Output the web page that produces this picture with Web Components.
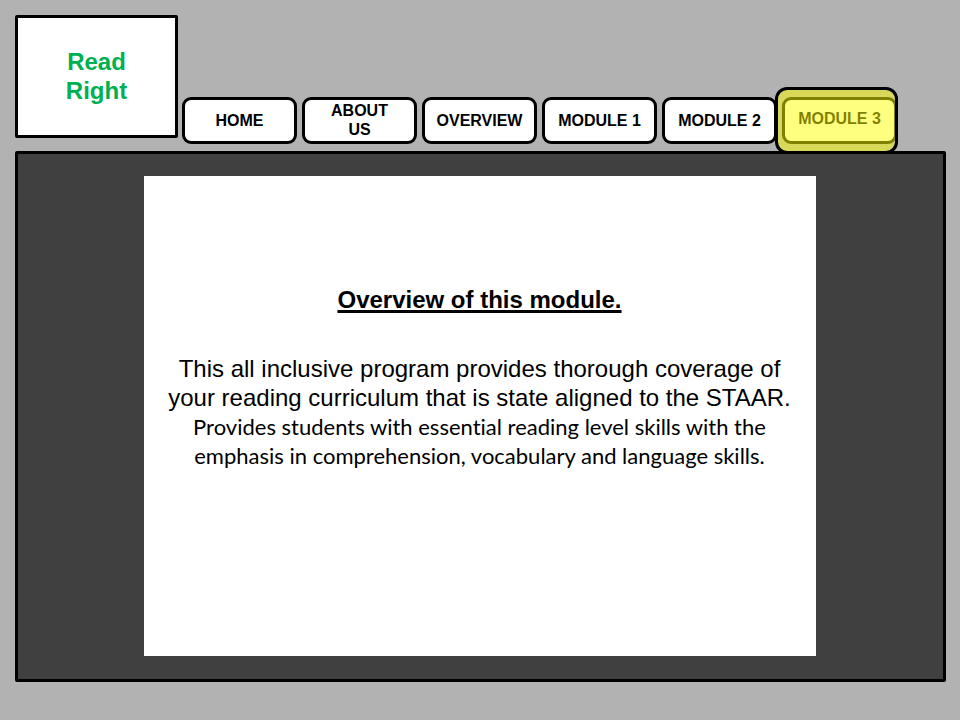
<!DOCTYPE html>
<html lang="en">
<head>
<meta charset="utf-8">
<title>Read Right</title>
<style>
  body { margin: 0; min-height: 100vh; background: #b2b2b2; color: #000; font-family: "Liberation Sans", Arial, sans-serif; }
</style>
</head>
<body>
<rr-page>
  <rr-logo slot="logo">Read<br>Right</rr-logo>
  <rr-nav slot="nav">
    <rr-tab>HOME</rr-tab>
    <rr-tab>ABOUT<br>US</rr-tab>
    <rr-tab>OVERVIEW</rr-tab>
    <rr-tab>MODULE 1</rr-tab>
    <rr-tab>MODULE 2</rr-tab>
    <rr-tab current>MODULE 3</rr-tab>
  </rr-nav>
  <rr-slide>
    <span slot="title">Overview of this module.</span>
    <span slot="lead">This all inclusive program provides thorough coverage of<br>your reading curriculum that is state aligned to the STAAR.</span>
    <span slot="detail">Provides students with essential reading level skills with the<br>emphasis in comprehension, vocabulary and language skills.</span>
  </rr-slide>
</rr-page>
<script>
const define = (name, html) => customElements.define(name, class extends HTMLElement {
  constructor() {
    super();
    this.attachShadow({ mode: "open" }).innerHTML = html;
  }
});

define("rr-page", `
  <style>
    :host { display: block; padding: 15px 14px 15px 15px; }
    header { display: flex; align-items: flex-end; gap: 4px; margin-bottom: 7px; }
    main { display: flex; justify-content: center; padding: 22px 2px 23px 0; border: 3px solid #000; border-radius: 2px; background: #404040; }
  </style>
  <header><slot name="logo"></slot><slot name="nav"></slot></header>
  <main><slot></slot></main>`);

define("rr-logo", `
  <style>
    :host { display: flex; flex: none; align-items: center; justify-content: center; box-sizing: border-box; width: 163px; min-height: 123px; margin-bottom: 6px; padding-bottom: 2px; border: 3px solid #000; border-radius: 2px; background: #fff; color: #00b050; font-size: 24px; line-height: 29px; font-weight: bold; text-align: center; }
  </style>
  <div><slot></slot></div>`);

define("rr-nav", `
  <style>
    :host { display: block; }
    nav { display: flex; gap: 5px; }
  </style>
  <nav><slot></slot></nav>`);

define("rr-tab", `
  <style>
    :host { display: block; position: relative; width: 115px; }
    a { display: flex; align-items: center; justify-content: center; box-sizing: border-box; min-height: 47px; padding-bottom: 1px; border: 3px solid #000; border-radius: 9px; background: #fff; color: #000; font-size: 16px; line-height: 19px; font-weight: bold; text-align: center; text-decoration: none; }
    :host([current]) a { padding-bottom: 4px; }
    :host([current])::after { content: ""; position: absolute; inset: -10px -1px -10px -7px; border: 3px solid #000; border-radius: 12px; background: rgb(255 255 0 / 50%); background-clip: padding-box; pointer-events: none; }
  </style>
  <a href="#"><div><slot></slot></div></a>`);

define("rr-slide", `
  <style>
    :host { display: block; box-sizing: border-box; width: 70vw; aspect-ratio: 7 / 5; padding: 109px 16px 16px; background: #fff; text-align: center; font-size: 24px; line-height: 29px; }
    h1 { margin: 0 0 40px; font-size: 24px; font-weight: bold; text-decoration: underline; text-decoration-thickness: 3px; text-underline-offset: 2px; text-decoration-skip-ink: none; }
    p { margin: 0; }
    .detail { font-family: Lato, "Open Sans", sans-serif; font-size: 22px; font-variant-ligatures: none; }
  </style>
  <h1><slot name="title"></slot></h1>
  <p><slot name="lead"></slot></p>
  <p class="detail"><slot name="detail"></slot></p>`);
</script>
</body>
</html>
